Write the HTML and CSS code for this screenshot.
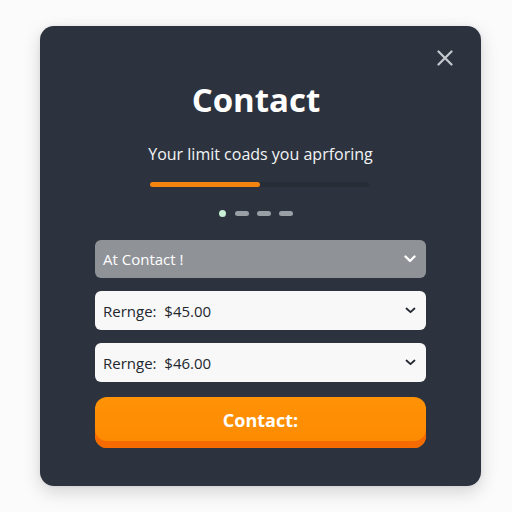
FILE: index.html
```html
<!DOCTYPE html>
<html lang="en">
<head>
<meta charset="utf-8">
<title>Contact</title>
<link rel="stylesheet" href="styles.css">
</head>
<body>
<div class="card">
  <button class="close" aria-label="Close">
    <svg width="16" height="16" viewBox="0 0 16 16"><path d="M1.5 1.5L14.5 14.5M14.5 1.5L1.5 14.5" stroke="#c5c9cf" stroke-width="2.2" stroke-linecap="round"/></svg>
  </button>
  <h1 class="title">Contact</h1>
  <p class="subtitle">Your limit coads you aprforing</p>
  <div class="progress"><div class="progress-fill" style="width:50%"></div></div>
  <div class="steps">
    <span class="dot"></span><span class="dash"></span><span class="dash"></span><span class="dash"></span>
  </div>
  <div class="fields">
    <div class="select select-grey">
      <span>At Contact !</span>
      <svg width="12" height="8" viewBox="0 0 12 8"><path d="M1.5 1.5L6 6L10.5 1.5" fill="none" stroke="#ffffff" stroke-width="2.4" stroke-linecap="round" stroke-linejoin="round"/></svg>
    </div>
    <div class="select select-white">
      <span>Rernge:&nbsp; $45.00</span>
      <svg width="11" height="7" viewBox="0 0 11 7"><path d="M1.5 1.5L5.5 5.2L9.5 1.5" fill="none" stroke="#222831" stroke-width="1.8" stroke-linecap="round" stroke-linejoin="round"/></svg>
    </div>
    <div class="select select-white">
      <span>Rernge:&nbsp; $46.00</span>
      <svg width="11" height="7" viewBox="0 0 11 7"><path d="M1.5 1.5L5.5 5.2L9.5 1.5" fill="none" stroke="#222831" stroke-width="1.8" stroke-linecap="round" stroke-linejoin="round"/></svg>
    </div>
  </div>
  <button class="cta">Contact:</button>
</div>
</body>
</html>
```
FILE: styles.css
```css
* { box-sizing: border-box; }
html, body { margin: 0; padding: 0; }
body {
  background: #fbfbfb;
  width: 512px;
  height: 512px;
  font-family: "Open Sans", "Noto Sans", sans-serif;
  padding: 26px 0 0 40px;
}
.card {
  position: relative;
  width: 441px;
  height: 460px;
  background: #2c333e;
  border-radius: 14px;
  box-shadow: 0 6px 18px rgba(0,0,0,0.16), 0 0 4px rgba(0,0,0,0.06);
  padding: 54px 55px 0 55px;
  display: flex;
  flex-direction: column;
  align-items: center;
}
.close {
  position: absolute;
  top: 24px;
  right: 28px;
  width: 16px;
  height: 16px;
  padding: 0;
  border: 0;
  background: none;
  display: flex;
}
.title {
  margin: 0 9px 0 0;
  font-size: 33px;
  line-height: 40px;
  font-weight: 700;
  color: #ffffff;
}
.subtitle {
  margin: 23px 0 0 0;
  font-size: 16px;
  line-height: 22px;
  color: #f2f3f5;
}
.progress {
  margin-top: 17px;
  width: 219px;
  height: 5px;
  border-radius: 3px;
  background: #272d37;
  align-self: flex-start;
  margin-left: 55px;
}
.progress-fill {
  height: 100%;
  border-radius: 3px;
  background: #f5830f;
}
.steps {
  margin: 23px 9px 0 0;
  display: flex;
  align-items: center;
  gap: 7.7px;
}
.dot {
  width: 7px;
  height: 7px;
  border-radius: 50%;
  background: #c9efd6;
  margin-right: 1px;
}
.dash {
  width: 14px;
  height: 5px;
  border-radius: 3px;
  background: #9a9fa6;
}
.fields {
  margin-top: 23px;
  width: 331px;
  display: flex;
  flex-direction: column;
  gap: 13px;
}
.select {
  height: 39px;
  border-radius: 6px;
  display: flex;
  align-items: center;
  justify-content: space-between;
  padding: 0 10px 0 8px;
  font-size: 15px;
}
.select-grey {
  height: 38px;
  background: #8f9398;
  color: #ffffff;
}
.select-white {
  background: #f8f8f8;
  color: #23272e;
}
.cta {
  margin-top: 15px;
  width: 331px;
  height: 51px;
  border: 0;
  border-radius: 12px;
  background: linear-gradient(#ff9206, #fc8a00);
  box-shadow: inset 0 -7px 0 #f56b02;
  color: #ffffff;
  font-family: "Open Sans", "Noto Sans", sans-serif;
  font-weight: 700;
  font-size: 18px;
  padding: 0 0 5px 0;
}
```
